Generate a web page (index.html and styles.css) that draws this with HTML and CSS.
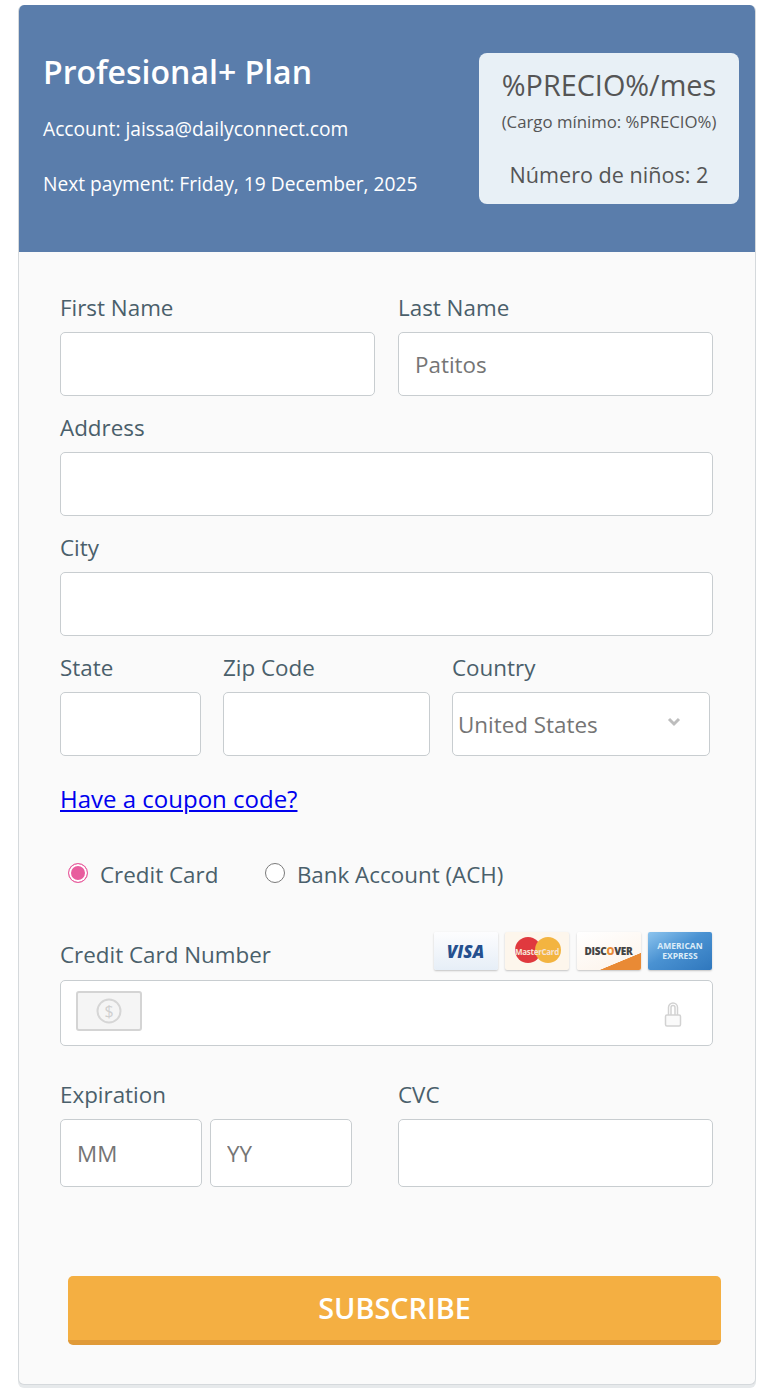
FILE: index.html
```html
<!DOCTYPE html>
<html lang="en">
<head>
    <meta charset="UTF-8">
    <meta name="viewport" content="width=device-width, initial-scale=1.0">
    <title>Subscribe</title>
    <link rel="stylesheet" href="styles.css">
</head>
<body>
    <div class="plan-card">
        <header class="plan-header">
            <div class="plan-info">
                <h1>Profesional+ Plan</h1>
                <p class="account">Account: jaissa@dailyconnect.com</p>
                <p class="next-payment">Next payment: Friday, 19 December, 2025</p>
            </div>
            <div class="price-box">
                <div class="price">%PRECIO%/mes</div>
                <div class="minimum">(Cargo mínimo: %PRECIO%)</div>
                <div class="children">Número de niños: 2</div>
            </div>
        </header>

        <form class="payment-form">
            <div class="row">
                <div class="field half">
                    <label for="first-name">First Name</label>
                    <input type="text" id="first-name">
                </div>
                <div class="field half">
                    <label for="last-name">Last Name</label>
                    <input type="text" id="last-name" placeholder="Patitos">
                </div>
            </div>

            <div class="field">
                <label for="address">Address</label>
                <input type="text" id="address">
            </div>

            <div class="field">
                <label for="city">City</label>
                <input type="text" id="city">
            </div>

            <div class="row location">
                <div class="field state">
                    <label for="state">State</label>
                    <input type="text" id="state">
                </div>
                <div class="field zip">
                    <label for="zip">Zip Code</label>
                    <input type="text" id="zip">
                </div>
                <div class="field country">
                    <label for="country">Country</label>
                    <div class="select-wrap">
                        <select id="country">
                            <option>United States</option>
                        </select>
                        <svg class="chevron" width="14" height="10" viewBox="0 0 14 10"><path d="M2 2l5 5 5-5" fill="none" stroke="#bdbdbd" stroke-width="3"/></svg>
                    </div>
                </div>
            </div>

            <a class="coupon" href="#">Have a coupon code?</a>

            <div class="pay-method">
                <label class="radio"><input type="radio" name="method" checked><span class="dot"></span>Credit Card</label>
                <label class="radio"><input type="radio" name="method"><span class="dot"></span>Bank Account (ACH)</label>
            </div>

            <div class="card-head">
                <label for="card-number">Credit Card Number</label>
                <div class="logos">
                    <div class="logo visa"><i>VISA</i></div>
                    <div class="logo mastercard">
                        <span class="mc-red"></span><span class="mc-yellow"></span>
                        <b>MasterCard</b>
                    </div>
                    <div class="logo discover"><b>DISC<span>O</span>VER</b></div>
                    <div class="logo amex"><b>AMERICAN<br>EXPRESS</b></div>
                </div>
            </div>
            <div class="card-input">
                <svg class="card-icon" width="66" height="40" viewBox="0 0 66 40">
                    <rect x="1" y="1" width="64" height="38" rx="2" fill="#f5f5f5" stroke="#d4d4d4" stroke-width="2"/>
                    <circle cx="33" cy="20" r="11.5" fill="none" stroke="#d6d6d6" stroke-width="2"/>
                    <text x="33" y="26" text-anchor="middle" class="dollar">$</text>
                </svg>
                <input type="text" id="card-number">
                <svg class="lock" width="18" height="26" viewBox="0 0 18 26">
                    <path d="M4.500 14V6.500a4.500 4.500 0 0 1 9 0V14M7 14V6.500a2 2 0 0 1 4 0V14" fill="none" stroke="#d2d2d2" stroke-width="1.500"/>
                    <rect x="1.500" y="14" width="15" height="11" rx="1.500" fill="#fafafa" stroke="#d2d2d2" stroke-width="1.500"/>
                </svg>
            </div>

            <div class="row expiry-row">
                <div class="expiry">
                    <label for="month">Expiration</label>
                    <div class="expiry-inputs">
                        <input type="text" id="month" placeholder="MM">
                        <input type="text" id="year" placeholder="YY">
                    </div>
                </div>
                <div class="field half">
                    <label for="cvc">CVC</label>
                    <input type="text" id="cvc">
                </div>
            </div>

            <button type="submit">SUBSCRIBE</button>
        </form>
    </div>
</body>
</html>
```

FILE: styles.css
```css
html, body {
    margin: 0;
    height: 1389px;
    overflow: hidden;
    background-color: #fff;
}

* {
    box-sizing: border-box;
}

body {
    padding: 5px 7px 0 18px;
    font-family: 'Open Sans', sans-serif;
    color: #4a5f6b;
}

/* Card around everything */
.plan-card {
    height: 1380px;
    background-color: #fafafa;
    border: 1px solid #d5d9dc;
    border-top: none;
    border-radius: 6px;
    box-shadow: 0 3px 0 #e6e9eb;
    overflow: hidden;
}

/* Blue header */
.plan-header {
    display: flex;
    justify-content: space-between;
    height: 247px;
    padding: 48px 16px 0 24px;
    background-color: #5a7dab;
    color: #fff;
}

.plan-info h1 {
    margin: 0;
    font-size: 32px;
    line-height: 38px;
    font-weight: 600;
}

.plan-info p {
    margin: 0;
    font-size: 19.200px;
    line-height: 26px;
}

.account {
    padding-top: 25px;
}

.next-payment {
    padding-top: 29px;
}

.price-box {
    width: 260px;
    height: 151px;
    padding-top: 13px;
    background-color: #e8f0f6;
    border-radius: 8px;
    color: #555;
    text-align: center;
}

.price {
    font-size: 28.800px;
    line-height: 38px;
}

.minimum {
    margin-top: 8px;
    font-size: 16.800px;
    line-height: 20px;
}

.children {
    margin-top: 28px;
    font-size: 21.600px;
    line-height: 30px;
}

/* Form */
.payment-form {
    padding: 24px 42px 0 41px;
}

.row {
    display: flex;
    gap: 23px;
}

.half {
    width: 315px;
}

.state {
    width: 141px;
}

.zip {
    width: 207px;
}

.country {
    width: 258px;
}

.location {
    gap: 22px;
}

label {
    font-size: 22.400px;
    line-height: 30px;
}

.field label,
.expiry label {
    display: block;
    height: 56px;
    padding-top: 17px;
}

input[type="text"],
select {
    display: block;
    width: 100%;
    height: 64px;
    padding: 0 16px;
    background-color: #fff;
    border: 1px solid #c8cdd0;
    border-radius: 5px;
    font-family: 'Open Sans', sans-serif;
    font-size: 22.400px;
    color: #757575;
}

input::placeholder {
    color: #757575;
    opacity: 1;
}

.select-wrap {
    position: relative;
}

select {
    padding: 0 5px;
    appearance: none;
}

.chevron {
    position: absolute;
    top: 25px;
    right: 29px;
}

.coupon {
    display: block;
    margin-top: 28px;
    font-size: 24px;
    line-height: 30px;
    color: #0000ee;
}

/* Radio buttons */
.pay-method {
    display: flex;
    gap: 46.500px;
    margin-top: 46px;
    padding-left: 8px;
}

.radio {
    display: flex;
    align-items: center;
}

.radio input {
    display: none;
}

.dot {
    width: 20px;
    height: 20px;
    margin-right: 12px;
    margin-top: -4px;
    background-color: #fff;
    border: 1.500px solid #7a7a7a;
    border-radius: 50%;
}

.radio input:checked + .dot {
    background-color: #e85d9e;
    border-color: #e85d9e;
    box-shadow: inset 0 0 0 2px #fff;
}

/* Card number */
.card-head {
    display: flex;
    justify-content: space-between;
    align-items: flex-end;
    height: 50px;
    margin-top: 40px;
}

.card-head label {
    padding-bottom: 10px;
}

.logos {
    display: flex;
    gap: 7.500px;
    padding-bottom: 10px;
    margin-right: 1px;
}

.logo {
    position: relative;
    width: 64px;
    height: 38px;
    border-radius: 2px;
    box-shadow: 0 1px 2px rgba(0, 0, 0, 0.22);
    display: flex;
    align-items: center;
    justify-content: center;
    overflow: hidden;
}

.visa {
    background: linear-gradient(#fdfdfe, #e6eef7);
    color: #25508f;
    font-size: 17px;
    font-weight: 800;
}

.mastercard {
    background-color: #fdf6ec;
}

.mc-red,
.mc-yellow {
    position: absolute;
    top: 5px;
    width: 26px;
    height: 26px;
    border-radius: 50%;
}

.mc-red {
    left: 10px;
    background-color: #e0393e;
}

.mc-yellow {
    left: 30px;
    background-color: #f3b440;
}

.mastercard b {
    position: relative;
    font-size: 8px;
    font-weight: 700;
    color: #f6e3d6;
    letter-spacing: -0.300px;
}

.discover {
    background: linear-gradient(157.500deg, #fff 0, #fdf6ef 73%, #e98a35 74%);
}

.discover b {
    font-size: 10px;
    font-weight: 800;
    color: #444;
    letter-spacing: -0.300px;
}

.discover span {
    color: #e98a35;
}

.amex {
    background: linear-gradient(150deg, #8cc4ee, #4a92d2 45%, #2f77bd);
}

.amex b {
    font-size: 8.500px;
    line-height: 10px;
    font-weight: 700;
    color: #dcecf8;
    text-align: center;
}

.card-input {
    display: flex;
    align-items: center;
    height: 66px;
    padding: 0 30px 0 15px;
    background-color: #fff;
    border: 1px solid #c8cdd0;
    border-radius: 5px;
}

.card-input input[type="text"] {
    flex: 1;
    width: auto;
    height: 100%;
    border: none;
    background: none;
}

.card-icon {
    margin-top: -4px;
}

.dollar {
    font-family: 'Open Sans', sans-serif;
    font-size: 16px;
    fill: #cfcfcf;
}

.lock {
    margin-top: 2px;
}

/* Expiration and CVC */
.expiry-row {
    margin-top: 17px;
    gap: 46px;
}

.expiry {
    width: 292px;
}

.expiry-inputs {
    display: flex;
    gap: 8px;
}

.expiry-row input[type="text"] {
    height: 68px;
}

/* Submit */
button {
    display: block;
    width: 653px;
    height: 69px;
    margin: 89px 0 0 8px;
    padding: 0 0 2px;
    background-color: #f4af42;
    border: none;
    border-bottom: 5px solid #e09a38;
    border-radius: 5px;
    font-family: 'Open Sans', sans-serif;
    font-size: 28.800px;
    font-weight: 600;
    color: #fff;
}
```
